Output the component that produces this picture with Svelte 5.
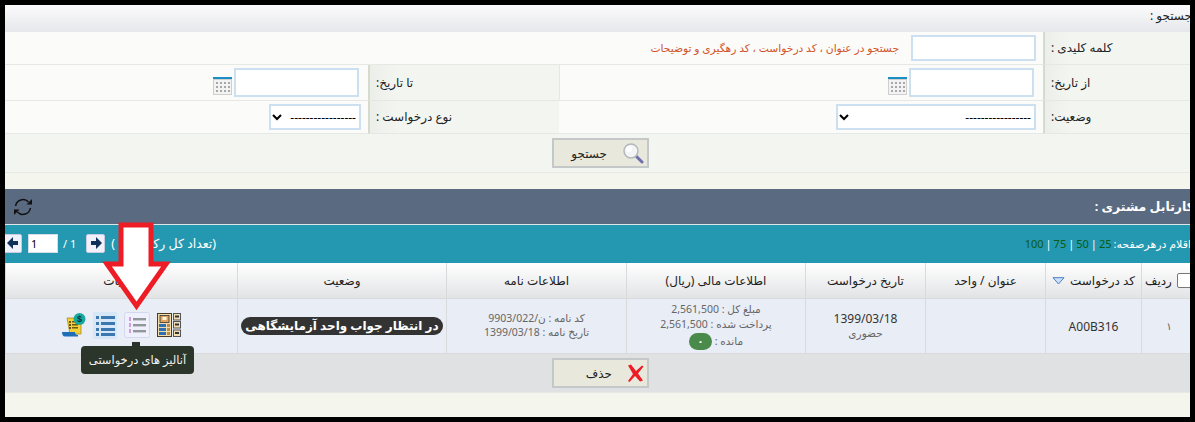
<script lang="ts">
  const sizes = ["25", "50", "75", "100"];
</script>

{#snippet calendar()}
  <svg class="cal" width="19" height="18" viewBox="0 0 19 18" aria-hidden="true">
    <rect width="19" height="18" fill="#cfcfcf" />
    <rect width="19" height="2" fill="#1a8fc4" />
    <rect x="1" y="3" width="17" height="14" fill="#f3f3f3" />
    {#each [0, 1, 2] as r}
      {#each [0, 1, 2, 3] as c}
        <rect x={3 + c * 4} y={5 + r * 4} width="2" height="2" fill="#a8a8a8" />
      {/each}
    {/each}
  </svg>
{/snippet}

<div class="shot">
  <div class="page">
    <div class="title">جستجو :</div>

    <div class="form">
      <div class="lab r1">کلمه کلیدی :</div>
      <div class="val wide r1">
        <input class="in key" />
        <span class="hint">جستجو در عنوان ، کد درخواست ، کد رهگیری و توضیحات</span>
      </div>

      <div class="lab r2">از تاریخ:</div>
      <div class="val r2 from">
        <input class="in date" />
        {@render calendar()}
      </div>
      <div class="lab r2">تا تاریخ:</div>
      <div class="val r2 to">
        <input class="in date" />
        {@render calendar()}
      </div>

      <div class="lab r3">وضعیت:</div>
      <div class="val r3">
        <select class="in status"><option>-----------------</option></select>
      </div>
      <div class="lab r3">نوع درخواست :</div>
      <div class="val r3 type">
        <select class="in kind"><option>-----------------</option></select>
      </div>
    </div>

    <div class="actions search">
      <button type="button" class="btn">
        <svg width="22" height="22" viewBox="0 0 22 22" aria-hidden="true">
          <path d="M13 13l7 7" stroke="#6f6fb0" stroke-width="3" stroke-linecap="round" />
          <circle cx="9" cy="9" r="7" fill="#f2f4f6" stroke="#b5b8bb" stroke-width="1.5" />
          <circle cx="7" cy="7" r="3" fill="#fff" />
        </svg>
        <span>جستجو</span>
      </button>
    </div>
    <div class="strip"></div>

    <div class="bar">
      <strong>کارتابل مشتری :</strong>
      <svg width="20" height="20" viewBox="0 0 20 20" fill="none" stroke="#111" stroke-width="1.5" aria-hidden="true">
        <path d="M2.600 9A7.500 7.500 0 0 1 15.500 5" />
        <path d="M17.400 11A7.500 7.500 0 0 1 4.500 15" />
        <path d="M13.500 7.500h5.500V2z" fill="#111" stroke="none" />
        <path d="M6.500 12.500H1V18z" fill="#111" stroke="none" />
      </svg>
    </div>

    <div class="pager">
      <div class="per">
        <span>اقلام درهرصفحه:</span>
        {#each sizes as s, i}
          <b>{s}</b>{#if i < sizes.length - 1}<i>|</i>{/if}
        {/each}
      </div>
      <div class="nav">
        <span class="count">(تعداد کل رکورد : 1 )</span>
        <button type="button" class="arrow" aria-label="بعدی">
          <svg width="12" height="12" viewBox="0 0 12 12"><path d="M1 4h5V0l6 6-6 6V8H1z" fill="#10305c" /></svg>
        </button>
        <span class="pages" dir="ltr">/ 1</span>
        <input class="pageno" value="1" dir="ltr" />
        <button type="button" class="arrow" aria-label="قبلی">
          <svg width="12" height="12" viewBox="0 0 12 12"><path d="M11 4H6V0L0 6l6 6V8h5z" fill="#10305c" /></svg>
        </button>
      </div>
    </div>

    <table>
      <colgroup>
        <col style="width:68px" /><col style="width:96px" /><col style="width:120px" /><col style="width:120px" />
        <col style="width:179px" /><col style="width:180px" /><col style="width:209px" /><col />
      </colgroup>
      <thead>
        <tr>
          <th class="rowno"><span class="box"></span> ردیف</th>
          <th>کد درخواست
            <svg class="sort" width="13" height="8" viewBox="0 0 13 8"><path d="M1 .7h11L6.500 7z" fill="#cfe0f5" stroke="#4a7fc4" /></svg>
          </th>
          <th>عنوان / واحد</th>
          <th>تاریخ درخواست</th>
          <th>اطلاعات مالی (ریال)</th>
          <th>اطلاعات نامه</th>
          <th>وضعیت</th>
          <th>عملیات</th>
        </tr>
      </thead>
      <tbody>
        <tr>
          <td class="rowno small">۱</td>
          <td class="code">A00B316</td>
          <td></td>
          <td>
            <div class="date-main">1399/03/18</div>
            <div class="small sub">حضوری</div>
          </td>
          <td class="small money">
            <div>مبلغ کل : 2,561,500</div>
            <div>پرداخت شده : 2,561,500</div>
            <div class="rest">مانده : <span class="zero">۰</span></div>
          </td>
          <td class="small letter">
            <div>کد نامه : ن/9903/022</div>
            <div>تاریخ نامه : 1399/03/18</div>
          </td>
          <td><span class="pill">در انتظار جواب واحد آزمایشگاهی</span></td>
          <td>
            <div class="icons">
              <svg width="24" height="24" viewBox="0 0 24 24" aria-hidden="true">
                <rect x=".5" y=".5" width="14" height="23" fill="#f0dcae" stroke="#4a3a2a" />
                <rect x="3" y="2.500" width="9" height="7" fill="#e2a45c" stroke="#333" stroke-width=".8" />
                <path d="M5.500 4h4v3h-4z" fill="#fff6e0" />
                <rect x="2" y="11" width="7" height="3" fill="#2f6fb0" />
                <rect x="10" y="11" width="3" height="3" fill="#b98a4c" />
                <rect x="2" y="15" width="7" height="3" fill="#2f6fb0" />
                <rect x="10" y="15" width="3" height="3" fill="#b98a4c" />
                <rect x="2" y="19" width="7" height="3" fill="#2f6fb0" />
                <rect x="10" y="19" width="3" height="3" fill="#b98a4c" />
                <g fill="#f0dcae" stroke="#555">
                  <rect x="16.500" y=".5" width="7" height="6.500" />
                  <rect x="16.500" y="8.500" width="7" height="6.500" />
                  <rect x="16.500" y="17" width="7" height="6.500" />
                </g>
                <g fill="#333">
                  <rect x="18" y="2.500" width="4" height="2" />
                  <rect x="18" y="10.500" width="4" height="2" />
                  <rect x="18" y="19" width="4" height="2" />
                </g>
              </svg>
              <svg class="analysis" width="26" height="26" viewBox="0 0 26 26" aria-hidden="true">
                <rect x=".5" y=".5" width="25" height="25" rx="2" fill="#eef0fb" stroke="#d3d8f2" />
                <g fill="#d39be0">
                  <rect x="5" y="5" width="2" height="4" />
                  <rect x="5" y="11" width="2" height="4" />
                  <rect x="5" y="17" width="2" height="4" />
                </g>
                <g fill="#92979c">
                  <rect x="9" y="6" width="13" height="2.400" />
                  <rect x="9" y="12" width="13" height="2.400" />
                  <rect x="9" y="18" width="13" height="2.400" />
                </g>
              </svg>
              <svg width="24" height="27" viewBox="0 0 24 27" aria-hidden="true">
                <rect width="24" height="27" fill="#d6e8f8" />
                <g fill="#3b78b0">
                  <rect x="3" y="4" width="3" height="3" />
                  <rect x="3" y="10" width="3" height="3" />
                  <rect x="3" y="16" width="3" height="3" />
                  <rect x="3" y="21" width="3" height="3" />
                  <rect x="8" y="4" width="14" height="3" />
                  <rect x="8" y="10" width="14" height="3" />
                  <rect x="8" y="16" width="14" height="3" />
                  <rect x="8" y="21" width="14" height="3" />
                </g>
              </svg>
              <svg width="24" height="24" viewBox="0 0 24 24" aria-hidden="true">
                <path d="M5 5h14v16H8z" fill="#f2cf3c" stroke="#a98a1c" stroke-width=".8" />
                <path d="M0 19h13c0 2 1 3 3 3v1.500H3c-2 0-3-2-3-4.500z" fill="#1f6fb8" />
                <g fill="#6a5a10">
                  <rect x="7" y="8" width="2" height="2" /><rect x="10" y="8" width="6" height="1.500" />
                  <rect x="7" y="11" width="2" height="2" /><rect x="10" y="11" width="6" height="1.500" />
                  <rect x="7" y="14" width="2" height="2" /><rect x="10" y="14" width="6" height="1.500" />
                </g>
                <circle cx="17.500" cy="6" r="6" fill="#19a8a0" />
                <text x="17.500" y="9" font-size="9" font-weight="700" fill="#06383a" text-anchor="middle" font-family="Liberation Sans, sans-serif">$</text>
              </svg>
            </div>
          </td>
        </tr>
      </tbody>
    </table>

    <div class="actions remove">
      <button type="button" class="btn">
        <svg width="17" height="18" viewBox="0 0 17 18" aria-hidden="true">
          <path d="M1 1.500l3-1L9 7l6-5.500 1.500 1L11 9.500l5 7-3 1L8 12l-5.500 6L1 17l5-7z" fill="#ee1c24" />
        </svg>
        <span>حذف</span>
      </button>
    </div>
  </div>

  <div class="tip">آنالیز های درخواستی</div>

  <svg class="pointer" width="70" height="90" viewBox="0 0 70 90" aria-hidden="true">
    <path d="M19 3h30v39h15L34.500 84 5 42h14z" fill="#fff" stroke="#ee1c24" stroke-width="5" stroke-linejoin="miter" />
  </svg>
</div>

<style>
  :global(body) {
    margin: 0;
  }
  .shot {
    position: relative;
    box-sizing: border-box;
    width: 1195px;
    height: 422px;
    border: 5px solid #000;
    overflow: hidden;
    background: #f4f5ec;
    direction: rtl;
    font-family: "Noto Sans", "DejaVu Sans", sans-serif;
    font-size: 12px;
    color: #222;
  }
  .page {
    margin-right: -20px;
  }
  .title {
    box-sizing: border-box;
    height: 27px;
    padding: 3px 18px 0 0;
    background: linear-gradient(#fbfbfd, #e6e7ea);
    line-height: 16px;
  }
  .form {
    display: grid;
    grid-template-columns: 167px 484px 191px 1fr;
    grid-template-rows: 33px 36px 33px;
  }
  .lab,
  .val {
    display: flex;
    align-items: center;
    box-sizing: border-box;
    border-bottom: 1px solid #e6e8e6;
  }
  .lab {
    background: linear-gradient(to left, #f3f5f1, #f3f5f1 85%, #ecefe9);
    border-left: 2px solid #d3dcce;
    justify-content: flex-end;
    padding-left: 6px;
    line-height: 16px;
  }
  .val {
    background: #fbfbf9;
    padding-right: 7px;
    gap: 12px;
  }
  .wide {
    grid-column: span 3;
  }
  .from,
  .to {
    gap: 2px;
    padding-right: 9px;
  }
  .from {
    border-left: 1px solid #e6e8e6;
  }
  .in {
    box-sizing: border-box;
    border: 1px solid #cde0f0;
    outline: 1px solid #cde0f0;
    outline-offset: -2px;
    background: #fff;
    border-radius: 0;
    font-family: inherit;
    font-size: 12px;
    height: 26px;
  }
  .key {
    width: 125px;
  }
  .date {
    width: 125px;
    height: 29px;
  }
  .status {
    width: 200px;
  }
  .kind {
    width: 92px;
  }
  .cal {
    flex: none;
    margin-top: 6px;
  }
  .hint {
    color: #d2552a;
    font-size: 10.700px;
  }
  .actions {
    display: flex;
    justify-content: center;
    align-items: center;
  }
  .search {
    height: 39px;
    background: #f3f5f1;
    border-bottom: 1px solid #e6e8e6;
    box-sizing: border-box;
  }
  .btn {
    position: relative;
    left: -7px;
    box-sizing: border-box;
    width: 97px;
    height: 30px;
    display: flex;
    align-items: center;
    gap: 15px;
    padding: 0 3px 0 0;
    background: #e8e9dc;
    border: 2px solid #c5c8c8;
    font-family: inherit;
    font-size: 12px;
    color: #222;
  }
  .strip {
    height: 16px;
  }
  .bar {
    box-sizing: border-box;
    height: 36px;
    display: flex;
    justify-content: space-between;
    align-items: center;
    padding: 0 36px 0 8px;
    margin-right: -20px;
    background: #5a6a80;
    border-bottom: 1px solid #dfe4e8;
    color: #fff;
    font-size: 12.500px;
  }
  .pager {
    box-sizing: border-box;
    height: 38px;
    display: flex;
    justify-content: space-between;
    align-items: center;
    padding-bottom: 2px;
    background: #2398b0;
    color: #fff;
    font-size: 11px;
  }
  .per {
    display: flex;
    align-items: center;
    gap: 2px;
    margin-right: 19px;
  }
  .per b {
    font-weight: 400;
    color: #0b5a14;
    font-size: 11px;
  }
  .per i {
    font-style: normal;
  }
  .nav {
    display: flex;
    align-items: center;
    margin-left: -2px;
  }
  .count {
    margin-left: 6px;
    font-size: 12.500px;
  }
  .arrow {
    width: 19px;
    height: 19px;
    padding: 0;
    display: grid;
    place-items: center;
    background: #f0f1fa;
    border: 1px solid #c9cbe0;
    border-radius: 2px;
  }
  .pages {
    margin: 0 10px 0 5px;
  }
  .pageno {
    box-sizing: border-box;
    width: 30px;
    height: 19px;
    margin-left: 6px;
    padding: 0 2px;
    border: 1px solid #d5dde5;
    font-size: 11px;
    font-family: inherit;
    text-align: left;
  }
  table {
    width: 100%;
    table-layout: fixed;
    border-collapse: collapse;
    background: #e9edf5;
  }
  th,
  td {
    border: 1px solid #d8dadc;
    border-top: 0;
    padding: 0;
    text-align: center;
    vertical-align: middle;
  }
  th {
    height: 35px;
    font-weight: 400;
    font-size: 12px;
    background: linear-gradient(#fff, #e2e3e5);
  }
  td {
    height: 52px;
  }
  th.rowno {
    text-align: right;
    padding-right: 17px;
  }
  td.rowno {
    text-align: right;
    padding-right: 37px;
  }
  .box {
    display: inline-block;
    width: 13px;
    height: 13px;
    vertical-align: -3px;
    margin-left: 2px;
    background: #fff;
    border: 1px solid #777;
    border-radius: 2px;
  }
  .sort {
    margin-right: 2px;
  }
  .small {
    font-size: 10.500px;
    color: #666;
  }
  .code {
    font-size: 12px;
    color: #333;
  }
  .date-main {
    font-size: 12px;
    line-height: 15px;
    color: #333;
  }
  .sub {
    line-height: 14px;
    margin-bottom: 1px;
  }
  .money div {
    line-height: 15px;
  }
  .letter div {
    line-height: 14px;
  }
  .letter {
    padding-bottom: 2px;
  }
  .money .rest {
    height: 17px;
    line-height: 17px;
    margin-top: 1px;
  }
  .zero {
    display: inline-block;
    width: 23px;
    height: 17px;
    line-height: 17px;
    border-radius: 9px;
    background: #4a8a4a;
    color: #fff;
    font-weight: 700;
    vertical-align: top;
  }
  .pill {
    display: block;
    margin: -1px 3px 0;
    height: 18px;
    line-height: 18px;
    border-radius: 9px;
    background: #333;
    color: #fff;
    font-weight: 700;
    font-size: 12px;
    white-space: nowrap;
    overflow: hidden;
  }
  .icons {
    display: flex;
    justify-content: center;
    align-items: center;
    gap: 7px;
    margin-top: -2px;
  }
  .remove {
    box-sizing: border-box;
    height: 39px;
    background: #e0e1e3;
    border-bottom: 1px solid #e6e8e6;
  }
  .tip {
    position: absolute;
    left: 76px;
    top: 341px;
    box-sizing: border-box;
    width: 113px;
    height: 28px;
    line-height: 28px;
    text-align: center;
    border-radius: 4px;
    background: #2b3529;
    color: #f2f2f2;
    font-size: 11.500px;
    white-space: nowrap;
  }
  .tip::before {
    content: "";
    position: absolute;
    left: 51px;
    top: -4px;
    width: 8px;
    height: 4px;
    background: #2b3529;
  }
  .pointer {
    position: absolute;
    left: 96.500px;
    top: 217px;
  }
</style>
